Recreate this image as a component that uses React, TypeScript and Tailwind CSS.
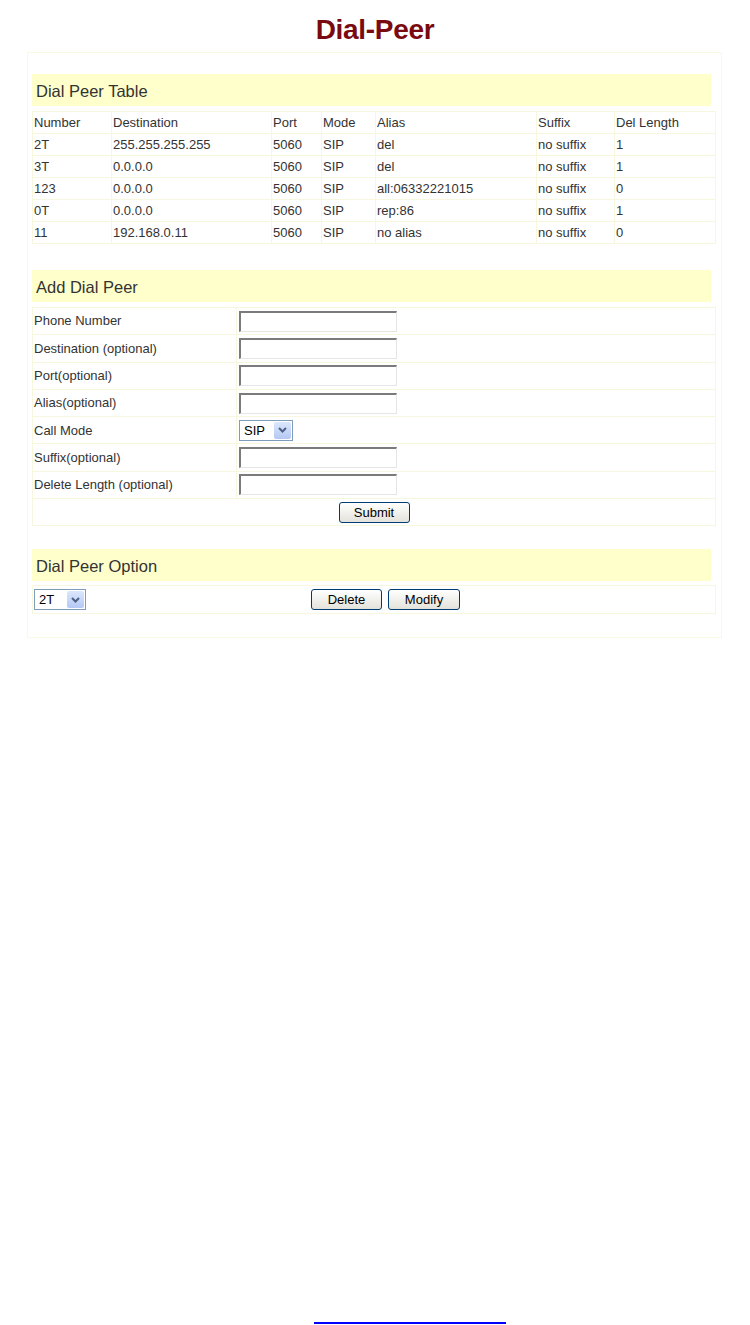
import type { ReactNode } from 'react'

const rows = [
  ['2T', '255.255.255.255', '5060', 'SIP', 'del', 'no suffix', '1'],
  ['3T', '0.0.0.0', '5060', 'SIP', 'del', 'no suffix', '1'],
  ['123', '0.0.0.0', '5060', 'SIP', 'all:06332221015', 'no suffix', '0'],
  ['0T', '0.0.0.0', '5060', 'SIP', 'rep:86', 'no suffix', '1'],
  ['11', '192.168.0.11', '5060', 'SIP', 'no alias', 'no suffix', '0'],
]
const heads = ['Number', 'Destination', 'Port', 'Mode', 'Alias', 'Suffix', 'Del Length']
const widths = ['w-[79px]', 'w-[160px]', 'w-[50px]', 'w-[54px]', 'w-[161px]', 'w-[78px]', 'w-[101px]']

const fields = ['Phone Number', 'Destination (optional)', 'Port(optional)', 'Alias(optional)', 'Call Mode', 'Suffix(optional)', 'Delete Length (optional)']

function Bar({ children }: { children: ReactNode }) {
  return <div className="flex h-[32px] w-[679px] items-center bg-[#ffffcc] pl-1 pt-[2px] text-[16.5px] text-[#333]">{children}</div>
}

function TextBox() {
  return <div className="h-[21px] w-[158px] border-t-2 border-l-2 border-r border-b border-t-[#7b7b7b] border-l-[#7b7b7b] border-r-[#e6e6e6] border-b-[#e6e6e6] bg-white" />
}

function Select({ value, w }: { value: string; w: string }) {
  return (
    <div className={`flex h-[21px] ${w} items-center justify-between border border-[#7f9db9] bg-white pl-1 pr-px text-[13px] text-black`}>
      <span>{value}</span>
      <span className="flex h-[17px] w-[17px] items-center justify-center rounded-[2px] bg-gradient-to-b from-[#dce7fd] to-[#b4c8f4]">
        <svg width="9" height="6" viewBox="0 0 9 6"><path d="M1 1l3.5 3.5L8 1" fill="none" stroke="#4d6185" strokeWidth="2" /></svg>
      </span>
    </div>
  )
}

function Btn({ children, w }: { children: ReactNode; w: string }) {
  return <button className={`h-[21px] ${w} rounded-[3px] border border-[#003c74] bg-gradient-to-b from-white to-[#e3e2da] text-[13px] leading-none text-black`}>{children}</button>
}

export default function App() {
  return (
    <div className="min-h-[1325px] bg-white font-['Liberation_Sans',Arial,sans-serif] text-[13px] text-[#333]">
      <div className="h-[52px] pt-[14px] text-center text-[28px] font-bold leading-[32px] tracking-[-0.3px] text-[#7a0a10]">Dial-Peer</div>
      <div className="ml-[27px] w-[695px] border border-[#f9f9e4] pt-[21px] pl-[4px] pb-[23px]">
        <Bar>Dial Peer Table</Bar>
        <table className="mt-[5px] w-[684px] border-collapse">
          <tbody>
            <tr className="h-[22px]">
              {heads.map((h, i) => <td key={h} className={`${widths[i]} border border-[#f7f7e0] pl-px`}>{h}</td>)}
            </tr>
            {rows.map(r => (
              <tr key={r[0]} className="h-[22px]">
                {r.map((c, i) => <td key={i} className="border border-[#f7f7e0] pl-px">{c}</td>)}
              </tr>
            ))}
          </tbody>
        </table>
        <div className="mt-[26px]"><Bar>Add Dial Peer</Bar></div>
        <table className="mt-[5px] w-[684px] border-collapse">
          <tbody>
            {fields.map(f => (
              <tr key={f} className="h-[27.3px]">
                <td className="w-[204px] border border-[#f7f7e0] pl-px">{f}</td>
                <td className="border border-[#f7f7e0] pl-[2px]">{f === 'Call Mode' ? <Select value="SIP" w="w-[54px]" /> : <TextBox />}</td>
              </tr>
            ))}
            <tr className="h-[27.3px]">
              <td colSpan={2} className="border border-[#f7f7e0] text-center"><Btn w="w-[71px]">Submit</Btn></td>
            </tr>
          </tbody>
        </table>
        <div className="mt-[23px]"><Bar>Dial Peer Option</Bar></div>
        <div className="mt-[4px] flex h-[29px] w-[684px] items-center border border-[#f7f7e0] pl-px">
          <Select value="2T" w="w-[52px]" />
          <div className="ml-[225px] flex gap-[6px]">
            <Btn w="w-[71px]">Delete</Btn>
            <Btn w="w-[72px]">Modify</Btn>
          </div>
        </div>
      </div>
      <div className="ml-[314px] mt-[684px] h-[2px] w-[192px] bg-[#0000ff]" />
    </div>
  )
}
